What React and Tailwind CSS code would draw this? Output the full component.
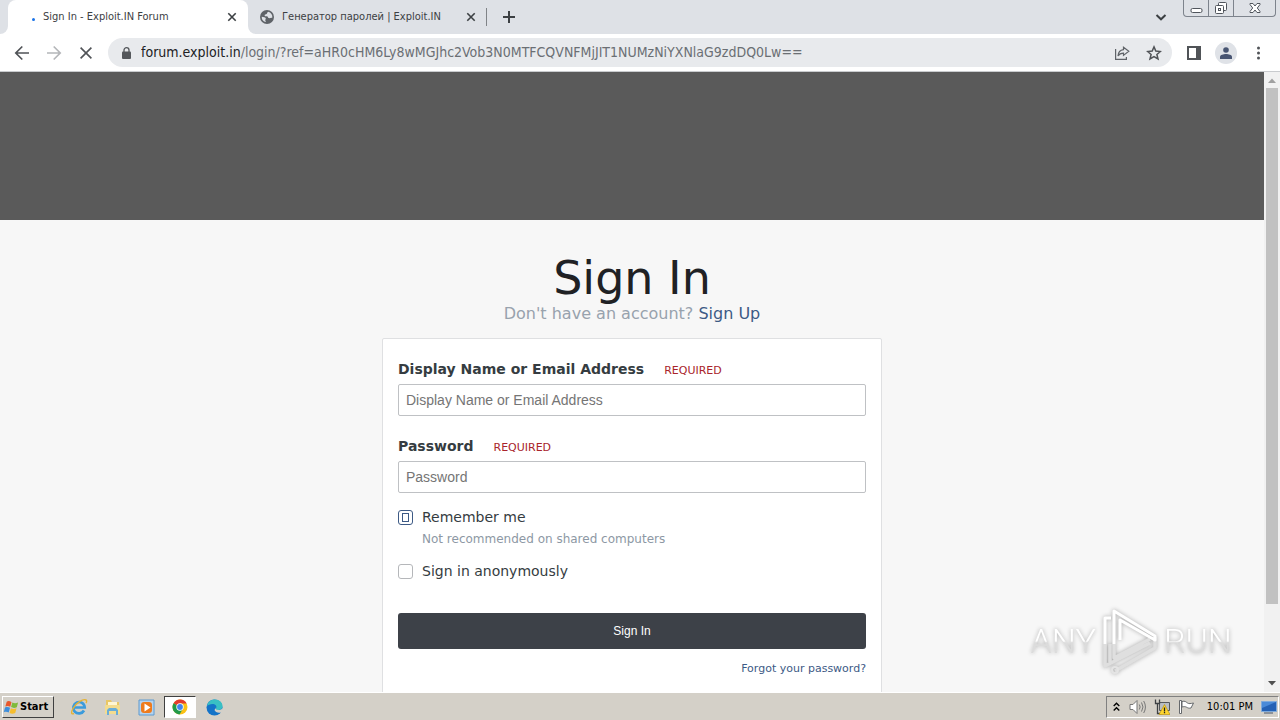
import React from "react";

const UI = "font-['DejaVu_Sans_Condensed','DejaVu_Sans',sans-serif]";

function CloseIcon({ size = 10 }) {
  return (
    <svg width={size} height={size} viewBox="0 0 10 10" fill="none" stroke="#3c4043" strokeWidth="1.6">
      <path d="M1.3 1.3 8.7 8.7M8.7 1.3 1.3 8.7" />
    </svg>
  );
}

function GlobeIcon() {
  return (
    <svg width="14" height="14" viewBox="0 0 14 14">
      <circle cx="7" cy="7" r="7" fill="#5f6368" />
      <path d="M8.2 1.8C7 2.2 7.4 3.4 6.6 4c-.8.6-2 .4-2 1.4 0 .8 1 .8 2.2.8 1.3 0 1 1.6 1.9 1.9 1 .2 2-.4 3.6-.3A5.300 5.300 0 0 0 8.200 1.800Z" fill="#dee1e6" />
      <path d="M1.700 6.800c1.800.2 3.600.4 4 1.400.4.900-.5 1.300-.4 2.200.1.700.8.8.7 1.700A5.300 5.300 0 0 1 1.700 6.800Z" fill="#dee1e6" />
    </svg>
  );
}

function TabStrip() {
  return (
    <header className="flex h-[34px] shrink-0 items-stretch bg-[#dee1e6]">
      <div className="flex w-2 bg-white">
        <div className="w-full rounded-br-lg bg-[#dee1e6]" />
      </div>
      <div className="flex w-60 items-center rounded-t-lg bg-white pr-[11px] pl-6">
        <span className="mt-1 mr-2 size-[3px] rounded-full bg-[#1a73e8]" />
        <span className="flex-1 whitespace-nowrap text-[11px] text-[#3c4043]">Sign In - Exploit.IN Forum</span>
        <button aria-label="Close tab"><CloseIcon /></button>
      </div>
      <div className="flex w-2 bg-white">
        <div className="w-full rounded-bl-lg bg-[#dee1e6]" />
      </div>
      <div className="flex w-[230px] items-center pr-[10px] pl-1">
        <GlobeIcon />
        <span className="ml-2 flex-1 whitespace-nowrap text-[11px] text-[#3c4043]">Генератор паролей | Exploit.IN</span>
        <button aria-label="Close tab"><CloseIcon /></button>
      </div>
      <div className="my-2 w-px bg-[#808387]" />
      <button aria-label="New tab" className="ml-4 flex items-center">
        <svg width="12" height="12" viewBox="0 0 12 12" stroke="#3c4043" strokeWidth="2"><path d="M6 0v12M0 6h12" /></svg>
      </button>
      <div className="flex-1" />
      <button aria-label="Search tabs" className="mr-4 flex items-center">
        <svg width="12" height="12" viewBox="0 0 12 12" fill="none" stroke="#3c4043" strokeWidth="2"><path d="m1.500 4 4.500 4.300L10.500 4" /></svg>
      </button>
      <div className="mr-1 flex h-[17px] rounded-b-sm border border-t-0 border-[#7d838c]">
        <button aria-label="Minimize" className="flex w-[25px] items-center justify-center border-r border-[#7d838c]">
          <svg width="13" height="16" viewBox="0 0 13 16" fill="#fff" stroke="#50555c"><rect x="1" y="8.500" width="11" height="4" rx="1.500" /></svg>
        </button>
        <button aria-label="Restore" className="flex w-[25px] items-center justify-center border-r border-[#7d838c]">
          <svg width="14" height="16" viewBox="0 0 14 16" fill="#fff" stroke="#50555c"><rect x="4.500" y="2.500" width="8" height="8" rx="1" /><rect x="1.500" y="5.500" width="8" height="8" rx="1" /><rect x="4.500" y="8.500" width="2" height="2" /></svg>
        </button>
        <button aria-label="Close window" className="flex w-[41px] items-center justify-center">
          <svg width="12" height="16" viewBox="0 0 12 16" fill="#fff" stroke="#50555c"><path d="M1 3.500h3l2 2.500 2-2.500h3v1L8.300 8l2.700 3.500v1H8L6 10l-2 2.500H1v-1L3.700 8 1 4.500Z" /></svg>
        </button>
      </div>
    </header>
  );
}

function Toolbar() {
  return (
    <nav className="flex h-[38px] shrink-0 items-center border-b border-[#c9cbce] bg-white">
      <button aria-label="Back" className="ml-[14px]">
        <svg width="16" height="16" viewBox="0 0 16 16" fill="none" stroke="#505357" strokeWidth="1.700"><path d="M15 8H2M8.300 1.500 1.800 8l6.500 6.500" /></svg>
      </button>
      <button aria-label="Forward" className="ml-4">
        <svg width="16" height="16" viewBox="0 0 16 16" fill="none" stroke="#b4b6b9" strokeWidth="1.700"><path d="M1 8h13M7.700 1.500 14.200 8l-6.500 6.500" /></svg>
      </button>
      <button aria-label="Stop loading" className="ml-[18px]">
        <svg width="12" height="12" viewBox="0 0 12 12" fill="none" stroke="#505357" strokeWidth="1.600"><path d="m.6.6 10.800 10.800M11.400.6.6 11.400" /></svg>
      </button>
      <div className="ml-4 flex h-[29px] min-w-0 flex-1 items-center rounded-full bg-[#e8eaed] pr-[10px] pl-[14px]">
        <svg width="9" height="12" viewBox="0 0 9 12" className="shrink-0"><rect y="4.500" width="9" height="7.500" rx="1" fill="#54575b" /><path d="M2 5V3a2.500 2.300 0 0 1 5 0v2" fill="none" stroke="#54575b" strokeWidth="1.300" /></svg>
        <p className="ml-[10px] min-w-0 flex-1 overflow-hidden whitespace-nowrap text-[14px] text-[#6b6f74]">
          <span className="text-[#202124]">forum.exploit.in</span>/login/?ref=aHR0cHM6Ly8wMGJhc2Vob3N0MTFCQVNFMjJIT1NUMzNiYXNlaG9zdDQ0Lw==
        </p>
        <button aria-label="Share this page">
          <svg width="16" height="16" viewBox="0 0 16 16" fill="none" stroke="#5f6368" strokeWidth="1.200"><path d="M1.600 4v10.400h10.800V12" /><path d="M9.500 2.200 14.800 6.300 9.500 10.400V8.200C7 8.200 5.200 9 4 11c.2-3.300 2-6 5.500-6.400Z" /></svg>
        </button>
        <button aria-label="Bookmark this tab" className="ml-4">
          <svg width="16" height="16" viewBox="0 0 16 16" fill="none" stroke="#505357" strokeWidth="1.500"><path d="m8 1.900 1.800 4.200 4.600.4-3.500 3 1.100 4.500L8 11.600 4 14l1.100-4.500-3.500-3 4.600-.4Z" /></svg>
        </button>
      </div>
      <button aria-label="Side panel" className="ml-[15px]">
        <svg width="14" height="14" viewBox="0 0 14 14"><rect x="1" y="1" width="12" height="12" fill="none" stroke="#505357" strokeWidth="2" /><path d="M9 1h4v12H9z" fill="#505357" /></svg>
      </button>
      <button aria-label="Profile" className="ml-[14px] flex size-[22px] items-center justify-center rounded-full bg-[#dfe2e7]">
        <svg width="12" height="12" viewBox="0 0 12 12" fill="#485572"><circle cx="6" cy="3" r="2.800" /><path d="M0 12V9.800C0 8 3.500 7 6 7s6 1 6 2.800V12Z" /></svg>
      </button>
      <button aria-label="Menu" className="mr-5 ml-5">
        <svg width="3" height="14" viewBox="0 0 3 14" fill="#505357"><circle cx="1.500" cy="2" r="1.500" /><circle cx="1.500" cy="7" r="1.500" /><circle cx="1.500" cy="12" r="1.500" /></svg>
      </button>
    </nav>
  );
}

function Field({ id, label, type }) {
  return (
    <div>
      <div className="flex h-6 items-center">
        <label htmlFor={id} className="text-[14px] font-bold text-[#353c41]">{label}</label>
        <span className="mt-[3px] ml-5 text-[11px] leading-4 text-[#a9242b]">REQUIRED</span>
      </div>
      <input
        id={id}
        type={type}
        placeholder={label}
        className="mt-[3px] block h-8 w-full rounded-xs border border-[#bfc1c4] bg-white px-[7px] font-['Liberation_Sans',sans-serif] text-[14px] text-[#353c41] placeholder:text-[#757575]"
      />
    </div>
  );
}

const checkboxClass =
  "grid size-[15px] shrink-0 appearance-none place-items-center rounded-[3px] border border-[#b5b7ba] bg-white checked:border-[#3d5a85] checked:before:h-[9px] checked:before:w-[7px] checked:before:border checked:before:border-[#3d5a85] checked:before:content-['']";

function SignInForm() {
  return (
    <form className="mt-[14px] w-[500px] shrink-0 rounded-xs border border-[#dfe0e2] bg-white px-[15px] pt-[18px] pb-6" onSubmit={(e) => e.preventDefault()}>
      <Field id="auth" label="Display Name or Email Address" type="text" />
      <div className="h-[18px]" />
      <Field id="password" label="Password" type="password" />
      <div className="mt-[14px] flex h-5 items-center gap-[9px]">
        <input id="remember" type="checkbox" defaultChecked className={checkboxClass} />
        <label htmlFor="remember" className="text-[14px] text-[#353c41]">Remember me</label>
      </div>
      <p className="ml-6 h-6 text-[12px] leading-6 text-[#8d98a4]">Not recommended on shared computers</p>
      <div className="mt-[10px] flex h-5 items-center gap-[9px]">
        <input id="anonymous" type="checkbox" className={checkboxClass} />
        <label htmlFor="anonymous" className="text-[14px] text-[#353c41]">Sign in anonymously</label>
      </div>
      <button type="submit" className="mt-8 h-9 w-full rounded-[3px] bg-[#3d4148] font-['Liberation_Sans',sans-serif] text-[12px] text-white">Sign In</button>
      <p className="mt-[10px] text-right text-[11px] leading-5 text-[#3d5a85]"><a href="#forgot">Forgot your password?</a></p>
    </form>
  );
}

function Watermark() {
  return (
    <div className="pointer-events-none absolute right-8 bottom-4 flex h-[70px] items-center gap-1 font-[Roboto,sans-serif] text-[34px] leading-none font-light text-white drop-shadow-[0_0_2px_#a8a8a8]">
      <span className="bg-linear-to-b from-white from-50% to-[#dcdcdc] to-55% bg-clip-text text-transparent">ANY</span>
      <svg width="60" height="66" viewBox="0 0 60 66" fill="none" strokeLinejoin="round">
        <path d="M5 36v22L50 35M14 36v14L50 31M15 63 55 40V29M10 36v18" stroke="#dfdfdf" strokeWidth="3.500" />
        <path d="M11 10H5v26M14 36V3l41 25v4L20 12v20" stroke="#fff" strokeWidth="3" />
        <circle cx="15" cy="62" r="3" stroke="#e4e4e4" strokeWidth="2" />
      </svg>
      <span className="bg-linear-to-b from-white from-50% to-[#dcdcdc] to-55% bg-clip-text text-transparent">RUN</span>
    </div>
  );
}

function Page() {
  return (
    <div className="flex min-h-0 flex-1">
      <main className="relative flex min-w-0 flex-1 flex-col items-center overflow-hidden bg-[#f7f7f7]">
        <div className="h-[148px] w-full shrink-0 bg-[#5a5a5a]" />
        <h1 className="mt-8 text-[46px] leading-[52px] text-[#202124]">Sign In</h1>
        <p className="text-[16px] leading-5 text-[#98a2ad]">
          Don't have an account? <a href="#signup" className="text-[#3d5a85]">Sign Up</a>
        </p>
        <SignInForm />
        <Watermark />
      </main>
      <div className="flex w-4 flex-col items-center bg-[#f1f1f1]">
        <svg width="16" height="16" viewBox="0 0 16 16" fill="#a0a0a0"><path d="M4 11h8L8 6.500Z" /></svg>
        <div className="w-3 flex-[516] bg-[#c1c1c1]" />
        <div className="flex-[72]" />
        <svg width="16" height="16" viewBox="0 0 16 16" fill="#505050"><path d="M4 5h8L8 9.500Z" /></svg>
      </div>
    </div>
  );
}

function EdgeIcon() {
  return (
    <svg width="17" height="17" viewBox="0 0 17 17">
      <circle cx="8.500" cy="8.500" r="8" fill="#1473c8" />
      <path d="M1 7C2 2.500 5 .5 9 .5c4.500 0 7.500 3 7.500 6.500 0 3-2 4-4.500 4-2 0-2.500-.7-2-1.500 1.500-2.500-1-4.500-3.500-4.500C4 5 2 6 1 7Z" fill="#39bfc4" />
      <path d="M10 8.500c-.8 1.500 0 2.500 2.500 2.500 1.800 0 3.200-.6 4-1.800l.5 3-2 1.300c-3 .8-6-.5-6.500-2.500Z" fill="#d4d0c8" />
    </svg>
  );
}

function Taskbar() {
  return (
    <footer className="flex h-7 shrink-0 items-center border-t border-white bg-[#d4d0c8] pt-px">
      <button className="ml-[2px] flex h-[22px] w-[52px] items-center border border-t-white border-r-[#404040] border-b-[#404040] border-l-white text-[11px] font-bold text-black">
        <svg width="17" height="17" viewBox="0 0 16 16"><path d="M3.500 2.500C5 1.500 6.500 2 8 3L6.800 7.400c-1.500-1-3-1-4.600-.3Z" fill="#e9582b" /><path d="M8.800 3.300c1.600 1 3.400 1 5.400 0L13 7.700c-2 1-3.800.8-5.400-.1Z" fill="#7fba3a" /><path d="M1.900 8c1.700-.7 3.200-.6 4.700.3l-1.200 4.500c-1.500-1-3-1.100-4.700-.4Z" fill="#3e8edb" /><path d="M7.400 8.600c1.600 1 3.400 1 5.300.1l-1.200 4.400c-2 1-3.700.9-5.300 0Z" fill="#f6bd2d" /></svg>
        Start
      </button>
      <button aria-label="Internet Explorer" className="ml-4">
        <svg width="18" height="18" viewBox="0 0 18 18" fill="none"><path d="M14 12.500A5.700 5.700 0 1 1 14.700 9.500H4" stroke="#3b9bdc" strokeWidth="2.700" /><path d="M4 15.500C1 17 1 14 3 10.500 6 5 13 .5 16 2c1 .5.7 2 0 3" stroke="#e5b335" strokeWidth="1.400" /></svg>
      </button>
      <button aria-label="File Explorer" className="ml-4">
        <svg width="17" height="17" viewBox="0 0 17 17"><path d="M2 1h5l1 2h7v12H2Z" fill="#e9c765" /><path d="M4 3h9v4H4Z" fill="#fff6d2" /><path d="M1 6h15v9H1Z" fill="#f3dc8f" /><path d="M3 16v-5l2-2h7l2 2v5h-2v-4H5v4Z" fill="#69add8" /></svg>
      </button>
      <button aria-label="Media Player" className="ml-[17px]">
        <svg width="17" height="17" viewBox="0 0 17 17"><path d="M1 1h15v15H1Z" fill="#b5d3ee" stroke="#5d9ad0" /><rect x="3" y="3" width="11" height="11" rx="3" fill="#ee7b1c" /><path d="M6.500 4.500v8l6-4Z" fill="#fff" /></svg>
      </button>
      <button aria-label="Chrome" className="ml-[9px] flex h-[22px] w-8 items-center justify-center border border-t-[#404040] border-r-white border-b-white border-l-[#404040] bg-white">
        <svg width="16" height="16" viewBox="0 0 16 16"><circle cx="8" cy="8" r="7.500" fill="#fbc116" /><path d="M8 8 1.500 4.200a7.500 7.500 0 0 1 13.200.3H8Z" fill="#e33b2e" /><path d="M8 8 1.500 4.200A7.500 7.500 0 0 0 7.500 15.500L11 9.800Z" fill="#229a4a" /><circle cx="8" cy="8" r="3.700" fill="#fff" /><circle cx="8" cy="8" r="2.900" fill="#4184ee" /></svg>
      </button>
      <button aria-label="Edge" className="ml-[10px]"><EdgeIcon /></button>
      <div className="mr-px ml-auto flex h-[22px] items-center border border-t-[#808080] border-r-white border-b-white border-l-[#808080] pr-px pl-[6px]">
        <svg width="7" height="10" viewBox="0 0 7 10" fill="none" stroke="#000" strokeWidth="1.400"><path d="m.7 4 2.800-2.700L6.300 4M.7 8.500l2.800-2.700 2.800 2.700" /></svg>
        <svg width="17" height="16" viewBox="0 0 17 16" fill="none" stroke="#777" className="ml-[9px]"><path d="M1 5.500h3l4-4v13l-4-4H1Z" fill="#fff" /><path d="M10.300 5.500q1.700 2.500 0 5M12.500 3.500q3 4.500 0 9M14.700 2q3.500 6 0 12" /></svg>
        <svg width="16" height="16" viewBox="0 0 16 16" fill="none" className="ml-2"><path d="M5.500 3.500h10v8h-10Z" fill="#b9bdc2" stroke="#55585c" /><path d="M1.500.5v4h4v-4M3.500 4.500v10h4" stroke="#3e4144" strokeWidth="1.300" /><path d="M10.500 5.500 16 15.500H5Z" fill="#ffd52e" stroke="#b58b00" strokeWidth=".6" /><path d="M10.500 8.500v4M10.500 13v1.300" stroke="#222" strokeWidth="1.300" /></svg>
        <svg width="17" height="16" viewBox="0 0 17 16" fill="#fff" stroke="#66696c" className="ml-2"><path d="M4 2.500c3-1 4 .5 5.500 1.500s3 .6 6 0l-2.500 5c-2 .5-3 0-4.500-.8S6 7.500 4 8Z" /><path d="M1.500 1.500H3.500v13h-2Z" /></svg>
        <time className="ml-3 whitespace-nowrap text-[11px] text-black">10:01 PM</time>
        <svg width="16" height="14" viewBox="0 0 16 14" className="ml-2"><path d="M.5 1.500h15v10H.5Z" fill="#2461b5" stroke="#7faadb" /><path d="M1 2h14L1 8Z" fill="#4a8ad8" /><path d="M3 13h9" stroke="#45556d" /></svg>
      </div>
    </footer>
  );
}

export default function App() {
  return (
    <div className="flex h-screen flex-col overflow-hidden bg-white font-['DejaVu_Sans',Verdana,sans-serif]">
      <div className={UI}>
        <TabStrip />
        <Toolbar />
      </div>
      <Page />
      <div className={UI}>
        <Taskbar />
      </div>
    </div>
  );
}
